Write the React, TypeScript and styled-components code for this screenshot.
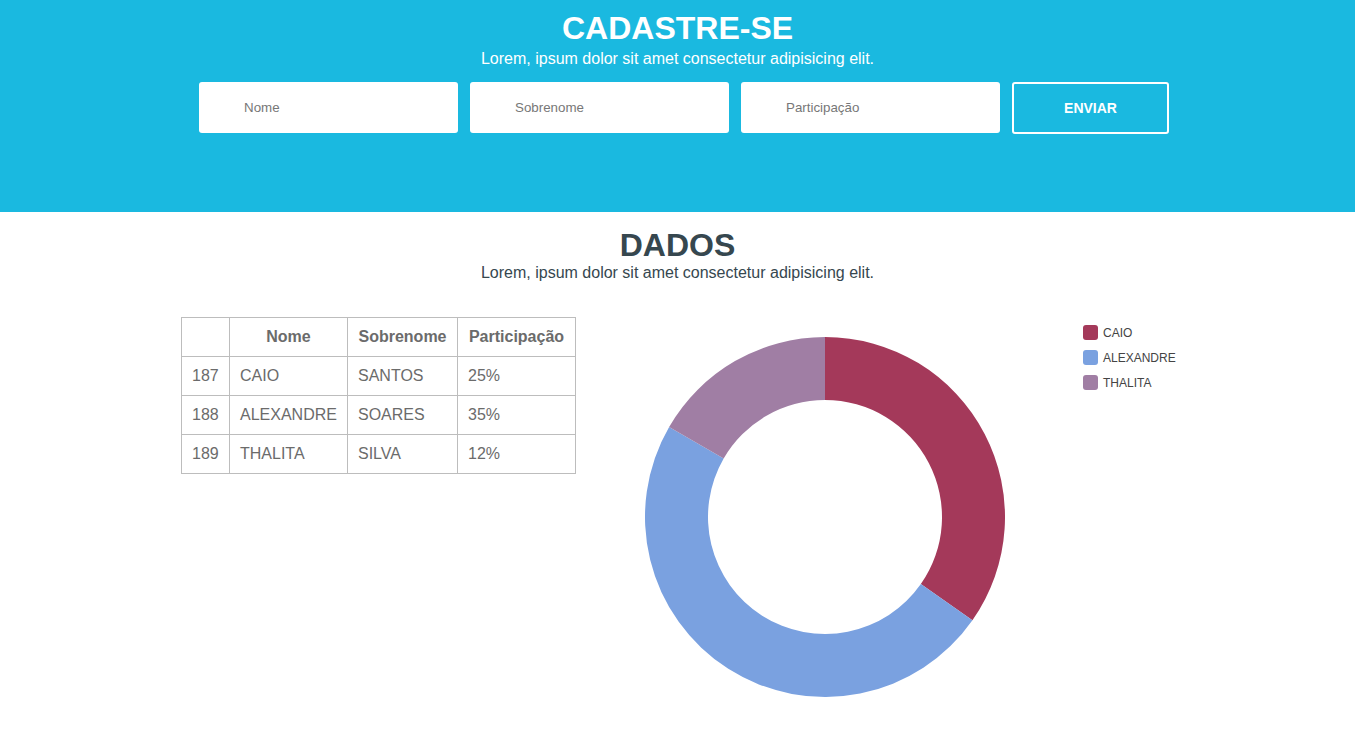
import React from "react";
import styled, { createGlobalStyle } from "styled-components";

const GlobalStyle = createGlobalStyle`
  html, body { margin: 0; padding: 0; background: #ffffff; }
  body { font-family: "Liberation Sans", Arial, sans-serif; }
  * { box-sizing: border-box; }
`;

const Header = styled.header`
  height: 212px;
  background: #1ab9e0;
  padding-top: 10px;
  text-align: center;
  color: #ffffff;
`;

const Title = styled.h1<{ $dark?: boolean }>`
  margin: 0;
  font-size: 32px;
  line-height: 36.8px;
  font-weight: 700;
  color: ${(p) => (p.$dark ? "#36474f" : "#ffffff")};
`;

const Subtitle = styled.p<{ $dark?: boolean; $offset?: number }>`
  margin: ${(p) => p.$offset ?? 0}px 0 0;
  font-size: 16px;
  line-height: 18.4px;
  color: ${(p) => (p.$dark ? "#36474f" : "#ffffff")};
`;

const Form = styled.form`
  display: flex;
  gap: 12px;
  width: 970px;
  margin: 14px 0 0 calc(50% - 478.5px);
  align-items: flex-start;
`;

const Field = styled.input`
  width: 259px;
  height: 51px;
  border: none;
  border-radius: 3px;
  background: #ffffff;
  padding: 0 0 0 45px;
  font-family: "Liberation Sans", Arial, sans-serif;
  font-size: 13.33px;
  color: #333;
  outline: none;
  &::placeholder { color: #777777; }
`;

const SendButton = styled.button`
  width: 157px;
  height: 52px;
  border: 2px solid #ffffff;
  border-radius: 3px;
  background: transparent;
  color: #ffffff;
  font-family: "Liberation Sans", Arial, sans-serif;
  font-size: 14px;
  font-weight: 700;
  cursor: pointer;
`;

const DataSection = styled.section`
  padding-top: 15px;
  text-align: center;
`;

const Content = styled.div`
  display: flex;
  align-items: flex-start;
  padding-left: 181px;
  margin-top: 35px;
  text-align: left;
`;

const Table = styled.table`
  border-collapse: collapse;
  table-layout: fixed;
  width: 394px;
  font-size: 16px;
  color: #6b6b6b;
  flex: none;
`;

const Th = styled.th<{ $w: number }>`
  width: ${(p) => p.$w}px;
  border: 1px solid #bdbdbd;
  padding: 10px;
  line-height: 18px;
  font-weight: 700;
  text-align: center;
  white-space: nowrap;
`;

const Td = styled.td`
  border: 1px solid #bdbdbd;
  padding: 10px;
  line-height: 18px;
  text-align: left;
  white-space: nowrap;
`;

const Chart = styled.svg`
  display: block;
  margin: 20px 0 0 69px;
  flex: none;
`;

const Legend = styled.ul`
  list-style: none;
  margin: 8px 0 0 78px;
  padding: 0;
  display: flex;
  flex-direction: column;
  gap: 10px;
`;

const LegendItem = styled.li`
  display: flex;
  align-items: center;
  gap: 5px;
  font-size: 12px;
  color: #444;
  height: 15px;
`;

const Swatch = styled.span<{ $color: string }>`
  width: 15px;
  height: 15px;
  border-radius: 3px;
  background: ${(p) => p.$color};
`;

const rows = [
  { id: 187, nome: "CAIO", sobrenome: "SANTOS", part: 25, color: "#a4395a" },
  { id: 188, nome: "ALEXANDRE", sobrenome: "SOARES", part: 35, color: "#7aa1e0" },
  { id: 189, nome: "THALITA", sobrenome: "SILVA", part: 12, color: "#a07ea4" },
];

function arcPath(a0: number, a1: number, R: number, r: number, c: number) {
  const pt = (a: number, rad: number) => {
    const t = (a * Math.PI) / 180;
    return [c + rad * Math.sin(t), c - rad * Math.cos(t)];
  };
  const large = a1 - a0 > 180 ? 1 : 0;
  const [x0, y0] = pt(a0, R);
  const [x1, y1] = pt(a1, R);
  const [x2, y2] = pt(a1, r);
  const [x3, y3] = pt(a0, r);
  return `M${x0} ${y0} A${R} ${R} 0 ${large} 1 ${x1} ${y1} L${x2} ${y2} A${r} ${r} 0 ${large} 0 ${x3} ${y3} Z`;
}

export default function App() {
  const total = rows.reduce((s, r) => s + r.part, 0);
  let acc = 0;
  const slices = rows.map((r) => {
    const a0 = (acc / total) * 360;
    acc += r.part;
    const a1 = (acc / total) * 360;
    return { d: arcPath(a0, a1, 180, 117, 180), color: r.color, key: r.id };
  });

  return (
    <>
      <GlobalStyle />
      <Header>
        <Title>CADASTRE-SE</Title>
        <Subtitle $offset={3}>Lorem, ipsum dolor sit amet consectetur adipisicing elit.</Subtitle>
        <Form onSubmit={(e) => e.preventDefault()}>
          <Field placeholder="Nome" />
          <Field placeholder="Sobrenome" />
          <Field placeholder="Participação" />
          <SendButton type="submit">ENVIAR</SendButton>
        </Form>
      </Header>
      <DataSection>
        <Title $dark>DADOS</Title>
        <Subtitle $dark>Lorem, ipsum dolor sit amet consectetur adipisicing elit.</Subtitle>
        <Content>
          <Table>
            <thead>
              <tr>
                <Th $w={48}></Th>
                <Th $w={118}>Nome</Th>
                <Th $w={110}>Sobrenome</Th>
                <Th $w={118}>Participação</Th>
              </tr>
            </thead>
            <tbody>
              {rows.map((r) => (
                <tr key={r.id}>
                  <Td>{r.id}</Td>
                  <Td>{r.nome}</Td>
                  <Td>{r.sobrenome}</Td>
                  <Td>{r.part}%</Td>
                </tr>
              ))}
            </tbody>
          </Table>
          <Chart width={360} height={360} viewBox="0 0 360 360">
            {slices.map((s) => (
              <path key={s.key} d={s.d} fill={s.color} />
            ))}
          </Chart>
          <Legend>
            {rows.map((r) => (
              <LegendItem key={r.id}>
                <Swatch $color={r.color} />
                {r.nome}
              </LegendItem>
            ))}
          </Legend>
        </Content>
      </DataSection>
    </>
  );
}
